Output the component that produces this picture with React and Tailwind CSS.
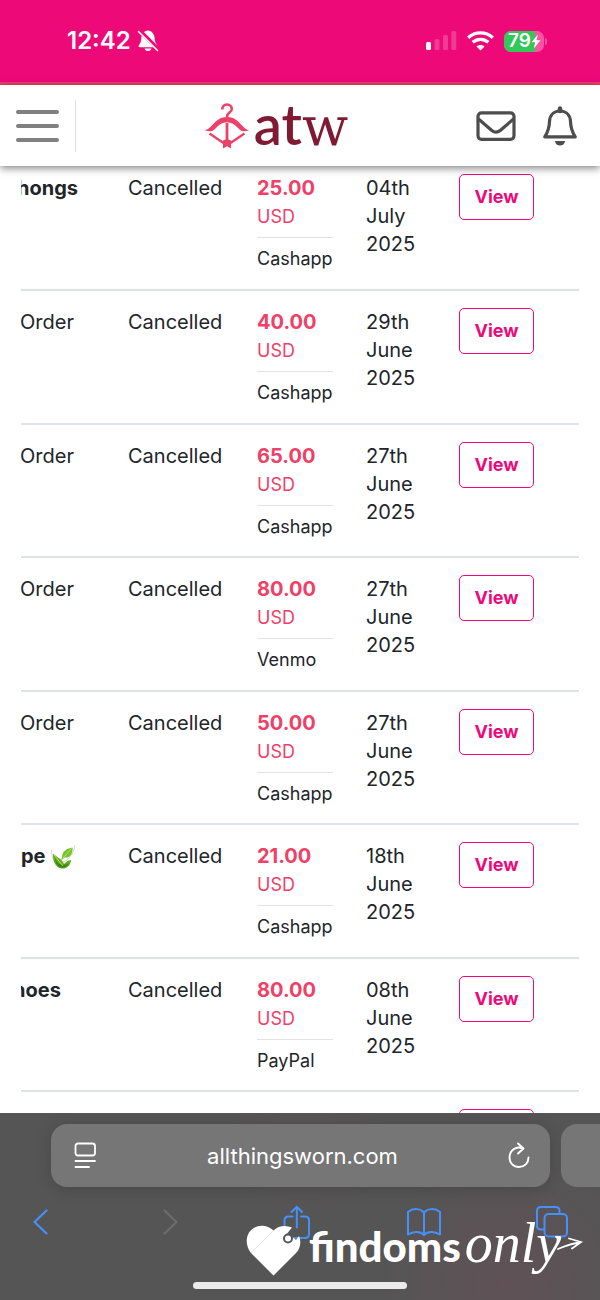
const ORDERS = [
  { title: "hongs", titleClass: "-ml-1 font-bold", status: "Cancelled", amount: "25.00", method: "Cashapp", date: ["04th", "July", "2025"] },
  { title: "Order", titleClass: "-ml-px", status: "Cancelled", amount: "40.00", method: "Cashapp", date: ["29th", "June", "2025"] },
  { title: "Order", titleClass: "-ml-px", status: "Cancelled", amount: "65.00", method: "Cashapp", date: ["27th", "June", "2025"] },
  { title: "Order", titleClass: "-ml-px", status: "Cancelled", amount: "80.00", method: "Venmo", date: ["27th", "June", "2025"] },
  { title: "Order", titleClass: "-ml-px", status: "Cancelled", amount: "50.00", method: "Cashapp", date: ["27th", "June", "2025"] },
  { title: "pe", titleClass: "font-bold", leaf: true, status: "Cancelled", amount: "21.00", method: "Cashapp", date: ["18th", "June", "2025"] },
  { title: "hoes", titleClass: "-ml-2 font-bold", status: "Cancelled", amount: "80.00", method: "PayPal", date: ["08th", "June", "2025"] },
  { title: "", date: [] },
];

function BellOffIcon() {
  return (
    <svg width="22" height="24" viewBox="0 0 22 24" aria-hidden="true">
      <path d="M11 1.500C6.900 2 4.600 5.200 4.300 9.500 4.100 13.500 2.800 14.800 1.800 16.500 1.300 17.600 1.700 18.200 2.800 18.200H19.200C20.300 18.200 20.700 17.600 20.200 16.500 19.200 14.800 17.900 13.500 17.700 9.500 17.400 5.200 15.100 2 11 1.500Z" fill="#fff" />
      <path d="M7.500 19.500H14.500C14 21.200 12.700 22 11 22S8 21.200 7.500 19.500Z" fill="#fff" />
      <path d="M2.500 1.500 21 20" stroke="#ee0979" strokeWidth="4" />
      <path d="M1.500 2.500 20.500 21.500" stroke="#fff" strokeWidth="1.600" strokeLinecap="round" />
    </svg>
  );
}

function SignalIcon() {
  return (
    <svg width="31" height="22" viewBox="0 0 31 22" fill="#fff" aria-hidden="true">
      <rect x="0" y="12" width="5" height="8" rx="1.500" />
      <rect x="8.500" y="9" width="5" height="11" rx="1.500" opacity=".2" />
      <rect x="17" y="5" width="5" height="15" rx="1.500" opacity=".2" />
      <rect x="25.300" y="1" width="5" height="19" rx="1.500" opacity=".2" />
    </svg>
  );
}

function WifiIcon() {
  return (
    <svg width="27" height="20" viewBox="0 0 27 20" fill="none" stroke="#fff" strokeWidth="3.300" aria-hidden="true">
      <path d="M1.200 6.700C8.200.2 18.800.2 25.800 6.700" />
      <path d="M5.700 11.300C10.200 7.300 16.800 7.300 21.300 11.300" />
      <path d="M13.500 19.500 9.500 15.400C11.800 13.400 15.200 13.400 17.500 15.400Z" fill="#fff" stroke="none" />
    </svg>
  );
}

function Battery() {
  return (
    <div className="flex items-center gap-px">
      <div className="relative h-[21px] w-10 overflow-hidden rounded-[7px] bg-[#f754a2]">
        <div className="h-full w-[31px] bg-[#34c759]" />
        <div className="absolute inset-0 flex items-center pl-1">
          <span className="text-[19px] leading-5 font-semibold">79</span>
          <svg width="10" height="15" viewBox="0 0 10 15" fill="#fff" aria-hidden="true">
            <path d="M6.800.5.500 8.200H4.200L2.800 14.500 9.500 6.300H5.500Z" />
          </svg>
        </div>
      </div>
      <div className="h-[7px] w-[2px] rounded-r-full bg-[#f754a2]" />
    </div>
  );
}

function StatusBar() {
  return (
    <div className="flex h-[85px] shrink-0 items-center justify-between border-b-[3px] border-[#ef3f6b] bg-[#ee0979] pr-[53px] pl-[67px] text-white">
      <div className="flex items-center gap-[6px]">
        <span className="text-2xl font-semibold">12:42</span>
        <BellOffIcon />
      </div>
      <div className="flex items-center gap-[10px]">
        <SignalIcon />
        <WifiIcon />
        <Battery />
      </div>
    </div>
  );
}

function HangerLogo() {
  return (
    <svg width="46" height="46" viewBox="0 0 46 46" fill="none" stroke="#ef4168" aria-hidden="true">
      <path d="M18.200 6.500C18.200 3.500 20.200 1.500 23 1.500 26 1.500 27.800 3.500 27.800 6 27.800 9.500 23.200 9.500 23.200 13V16" strokeWidth="2.600" />
      <path d="M.8 27.500C8.500 25.500 11 14 23 14S37.500 25.500 45.200 27.500C40 29 37.500 28.500 34.500 25.500 30.500 21.500 27.500 19.300 23 19.300S15.500 21.500 11.500 25.500C8.500 28.500 6 29 .8 27.500Z" fill="#ef4168" stroke="none" />
      <path d="M5.500 30.500 19.500 40M40.500 30.500 26.500 40" strokeWidth="2.400" />
      <path d="M23 20V39" strokeWidth="2.800" />
      <path d="M19 37.500 23 36 27 37.500V45.500L23 43.300 19 45.500Z" fill="#ef4168" stroke="none" />
    </svg>
  );
}

function SiteHeader() {
  return (
    <header className="relative z-10 flex h-[81px] shrink-0 items-center justify-between bg-white pr-[22px] pl-4 shadow-[0_2px_8px_rgba(0,0,0,0.5)]">
      <div className="flex items-center gap-4">
        <button aria-label="Menu" className="flex w-[43px] flex-col gap-[10px]">
          <span className="h-1 rounded-full bg-[#808080]" />
          <span className="h-1 rounded-full bg-[#808080]" />
          <span className="h-1 rounded-full bg-[#808080]" />
        </button>
        <span className="h-[52px] w-px bg-[#dedede]" />
      </div>
      <a href="#" className="flex items-center gap-1 text-[#7f1a32]">
        <HangerLogo />
        <span className="font-[Lato] text-[56px] leading-[54px] font-semibold">
          at<span className="font-['DejaVu_Serif'] text-[54px] font-normal">w</span>
        </span>
      </a>
      <div className="flex items-center gap-[26px] text-[#4d4d4d]">
        <button aria-label="Messages">
          <svg width="40" height="30" viewBox="0 0 40 30" fill="none" stroke="currentColor" strokeWidth="3.200">
            <rect x="2" y="1.800" width="36" height="26.500" rx="3.500" />
            <path d="M2.500 8 15.500 19.200C18.500 21.800 21.500 21.800 24.500 19.200L37.500 8" />
          </svg>
        </button>
        <button aria-label="Notifications">
          <svg width="36" height="40" viewBox="0 0 36 40" fill="none" stroke="currentColor" strokeWidth="3.200" strokeLinejoin="round">
            <path d="M18 5C11.500 5 7.800 9.500 7.500 15.500 7.300 22.500 6.300 25.500 2.700 30.800H33.300C29.700 25.500 28.700 22.500 28.500 15.500 28.200 9.500 24.500 5 18 5Z" />
            <path d="M18 5V2.500" strokeWidth="4.500" strokeLinecap="round" />
            <path d="M13 35H23C22.600 38 20.700 39.500 18 39.500S13.400 38 13 35Z" fill="currentColor" stroke="none" />
          </svg>
        </button>
      </div>
    </header>
  );
}

function LeafIcon() {
  return (
    <svg width="26" height="26" viewBox="0 0 26 26" className="inline-block" aria-hidden="true">
      <path d="M1.500 4.500C1.500 12 4 18 9 22" stroke="#cfd8c8" fill="none" />
      <path d="M24.500.5C25 6 20 14 12.500 17.500" stroke="#cfd8c8" fill="none" />
      <path d="M12 12C12.500 5.500 17 3.500 22.500 2.500 23 8 20.500 13.500 14.500 12.500L11 15.500Z" fill="#78c32b" />
      <path d="M3 8.500C8.500 13.500 12 14 14 19 16 16.500 18 15.500 21 15 20.500 21 16.500 24 11.500 23.500 5.500 22.500 2.500 16 3 8.500Z" fill="#63ad20" />
      <path d="M5 13C7 19 11 21.500 19 18.500 15 25 5.500 24.500 5 13Z" fill="#3a8518" />
      <path d="M13 13 21.500 3.500M4 10 13 21" stroke="#c5e66e" strokeWidth=".8" />
    </svg>
  );
}

function OrderRow({ order }) {
  return (
    <tr className="border-b-2 border-[#dee2e6] align-top odd:h-[133px] even:h-[134px]">
      <td className="w-[107px] overflow-hidden pt-[17px] whitespace-nowrap">
        <div className={order.titleClass}>
          {order.title} {order.leaf && <LeafIcon />}
        </div>
      </td>
      <td className="w-[129px] pt-[17px]">{order.status}</td>
      <td className="w-[109px] pt-[17px]">
        {order.amount && (
          <>
            <div className="font-bold text-[#ef4168]">{order.amount}</div>
            <div className="text-lg leading-[29px] text-[#ef4168]">USD</div>
            <div className="mt-[6px] w-[76px] border-t border-[#e2e2e2] pt-[6px] text-lg leading-[29px]">{order.method}</div>
          </>
        )}
      </td>
      <td className="w-[93px] pt-[17px]">
        {order.date.map((part) => (
          <div key={part}>{part}</div>
        ))}
      </td>
      <td className="pt-[17px]">
        <button className="h-[46px] w-[75px] rounded-[5px] border border-[#ee0979] text-lg font-bold text-[#ee0979]">
          View
        </button>
      </td>
    </tr>
  );
}

function ToolbarButton({ label, className, children }) {
  return (
    <button aria-label={label} className={`flex w-9 justify-center ${className || ""}`}>
      {children}
    </button>
  );
}

function Toolbar() {
  return (
    <div className="mt-[17px] flex items-center justify-between pr-[30px] pl-[23px] text-[#4590fa]">
      <ToolbarButton label="Back">
        <svg width="18" height="32" viewBox="0 0 18 32" fill="none" stroke="currentColor" strokeWidth="2.200" strokeLinecap="round" strokeLinejoin="round">
          <path d="M14.500 4.500 2.500 16 14.500 27.500" />
        </svg>
      </ToolbarButton>
      <ToolbarButton label="Forward" className="text-[#6c6c6c]">
        <svg width="18" height="32" viewBox="0 0 18 32" fill="none" stroke="currentColor" strokeWidth="2.200" strokeLinecap="round" strokeLinejoin="round">
          <path d="M4.500 4.500 16.500 16 4.500 27.500" />
        </svg>
      </ToolbarButton>
      <ToolbarButton label="Share">
        <svg width="30" height="36" viewBox="0 0 30 36" fill="none" stroke="currentColor" strokeWidth="2" strokeLinecap="round">
          <path d="M10.500 12.500H6.500C4 12.500 2.500 14 2.500 16.500V30C2.500 32.500 4 34 6.500 34H23C25.500 34 27 32.500 27 30V16.500C27 14 25.500 12.500 23 12.500H19" />
          <path d="M14.800 23.500V3M9.500 8 14.800 2.800 20 8" />
        </svg>
      </ToolbarButton>
      <ToolbarButton label="Bookmarks">
        <svg width="36" height="32" viewBox="0 0 36 32" fill="none" stroke="currentColor" strokeWidth="2" strokeLinejoin="round">
          <path d="M18 7C15 2.500 7.500 1.500 2 6V28.500C6.500 25.500 14 24.500 18 29 22 24.500 29.500 25.500 34 28.500V6C28.500 1.500 21 2.500 18 7ZM18 7V29" />
        </svg>
      </ToolbarButton>
      <ToolbarButton label="Tabs">
        <svg width="32" height="32" viewBox="0 0 32 32" fill="none" stroke="currentColor" strokeWidth="2">
          <path d="M8.500 23.500H5C2.500 23.500 1 22 1 19.500V5C1 2.500 2.500 1 5 1H19.500C22 1 23.500 2.500 23.500 5V8" />
          <rect x="8.500" y="8" width="22.500" height="22.500" rx="4" />
        </svg>
      </ToolbarButton>
    </div>
  );
}

function Watermark() {
  return (
    <div className="pointer-events-none absolute right-0 bottom-[14px] flex w-[354px] items-center text-white">
      <svg width="56" height="52" viewBox="0 0 56 52" className="mr-[7px] shrink-0" aria-hidden="true">
        <path d="M27.500 50.500 5 28C-1.500 20-.5 8 7.500 3.200 14-.7 22 .3 27.500 5.500 32.500.7 39.500-.2 46 2.500L39.500 10.500C44.500 11.500 48 13 50 15L53 11C55.500 17 54.500 23.500 50 28Z" fill="#fff" />
        <path d="M5 28 27.500 5.500" stroke="#dedede" strokeWidth=".8" />
        <circle cx="42" cy="13.500" r="4" fill="#fff" stroke="#555" strokeWidth="2" />
      </svg>
      <div className="flex items-baseline pb-3">
        <span className="font-[Lato] text-[42px] leading-[56px] font-black">findoms</span>
        <span className="ml-1 font-['Liberation_Serif'] text-[56px] leading-[56px] italic">only</span>
      </div>
      <svg width="26" height="18" viewBox="0 0 26 18" className="mb-3 -ml-1" fill="none" stroke="#fff" strokeWidth="1.800" strokeLinecap="round" aria-hidden="true">
        <path d="M1 13C7 10.500 14 7.500 23 6.500M12 2.500 24 6 15 12.500" />
      </svg>
    </div>
  );
}

function BrowserBar() {
  return (
    <footer className="relative flex h-[187px] shrink-0 flex-col overflow-hidden bg-[#555] bg-[radial-gradient(circle_at_51%_15%,#6b50584d,transparent_24%),radial-gradient(circle_at_85%_90%,#704c5966,transparent_25%)] pt-[11px]">
      <div className="flex gap-[11px] pl-[51px]">
        <div className="flex h-[63px] flex-1 items-center justify-between rounded-2xl bg-[#767676] pr-5 pl-[23px] text-white shadow-[0_2px_16px_rgba(0,0,0,0.16)]">
          <button aria-label="Page settings">
            <svg width="23" height="27" viewBox="0 0 23 27" fill="none" stroke="currentColor" strokeWidth="1.800" strokeLinecap="round">
              <rect x="1.500" y="1.500" width="19.500" height="12" rx="2.500" />
              <path d="M1.500 19H21M1.500 25H15" />
            </svg>
          </button>
          <span className="text-[22px]">allthingsworn.com</span>
          <button aria-label="Reload">
            <svg width="22" height="27" viewBox="0 0 22 27" fill="none" stroke="currentColor" strokeWidth="1.900" strokeLinecap="round" strokeLinejoin="round">
              <path d="M14.500 6.300C8 3.800 1.500 8.500 1.500 15.500 1.500 21 5.500 25 11 25S20.500 21 20.500 15.500M10 1.500 15.500 6.500 10 11.500" />
            </svg>
          </button>
        </div>
        <div className="h-[63px] w-[39px] rounded-l-2xl bg-[#767676]" />
      </div>
      <Toolbar />
      <Watermark />
      <div className="mx-auto mt-auto mb-[11px] h-[7px] w-[214px] rounded-full bg-[#ecebec]" />
    </footer>
  );
}

export default function App() {
  return (
    <div className="flex h-screen flex-col overflow-hidden bg-white font-['Inter',sans-serif] text-xl leading-7 text-[#212529]">
      <StatusBar />
      <SiteHeader />
      <main className="min-h-0 flex-1 overflow-hidden px-[21px]">
        <div className="-mt-[9px] overflow-hidden">
          <table className="w-full table-fixed border-collapse">
            <tbody>
              {ORDERS.map((order, i) => (
                <OrderRow key={i} order={order} />
              ))}
            </tbody>
          </table>
        </div>
      </main>
      <BrowserBar />
    </div>
  );
}
